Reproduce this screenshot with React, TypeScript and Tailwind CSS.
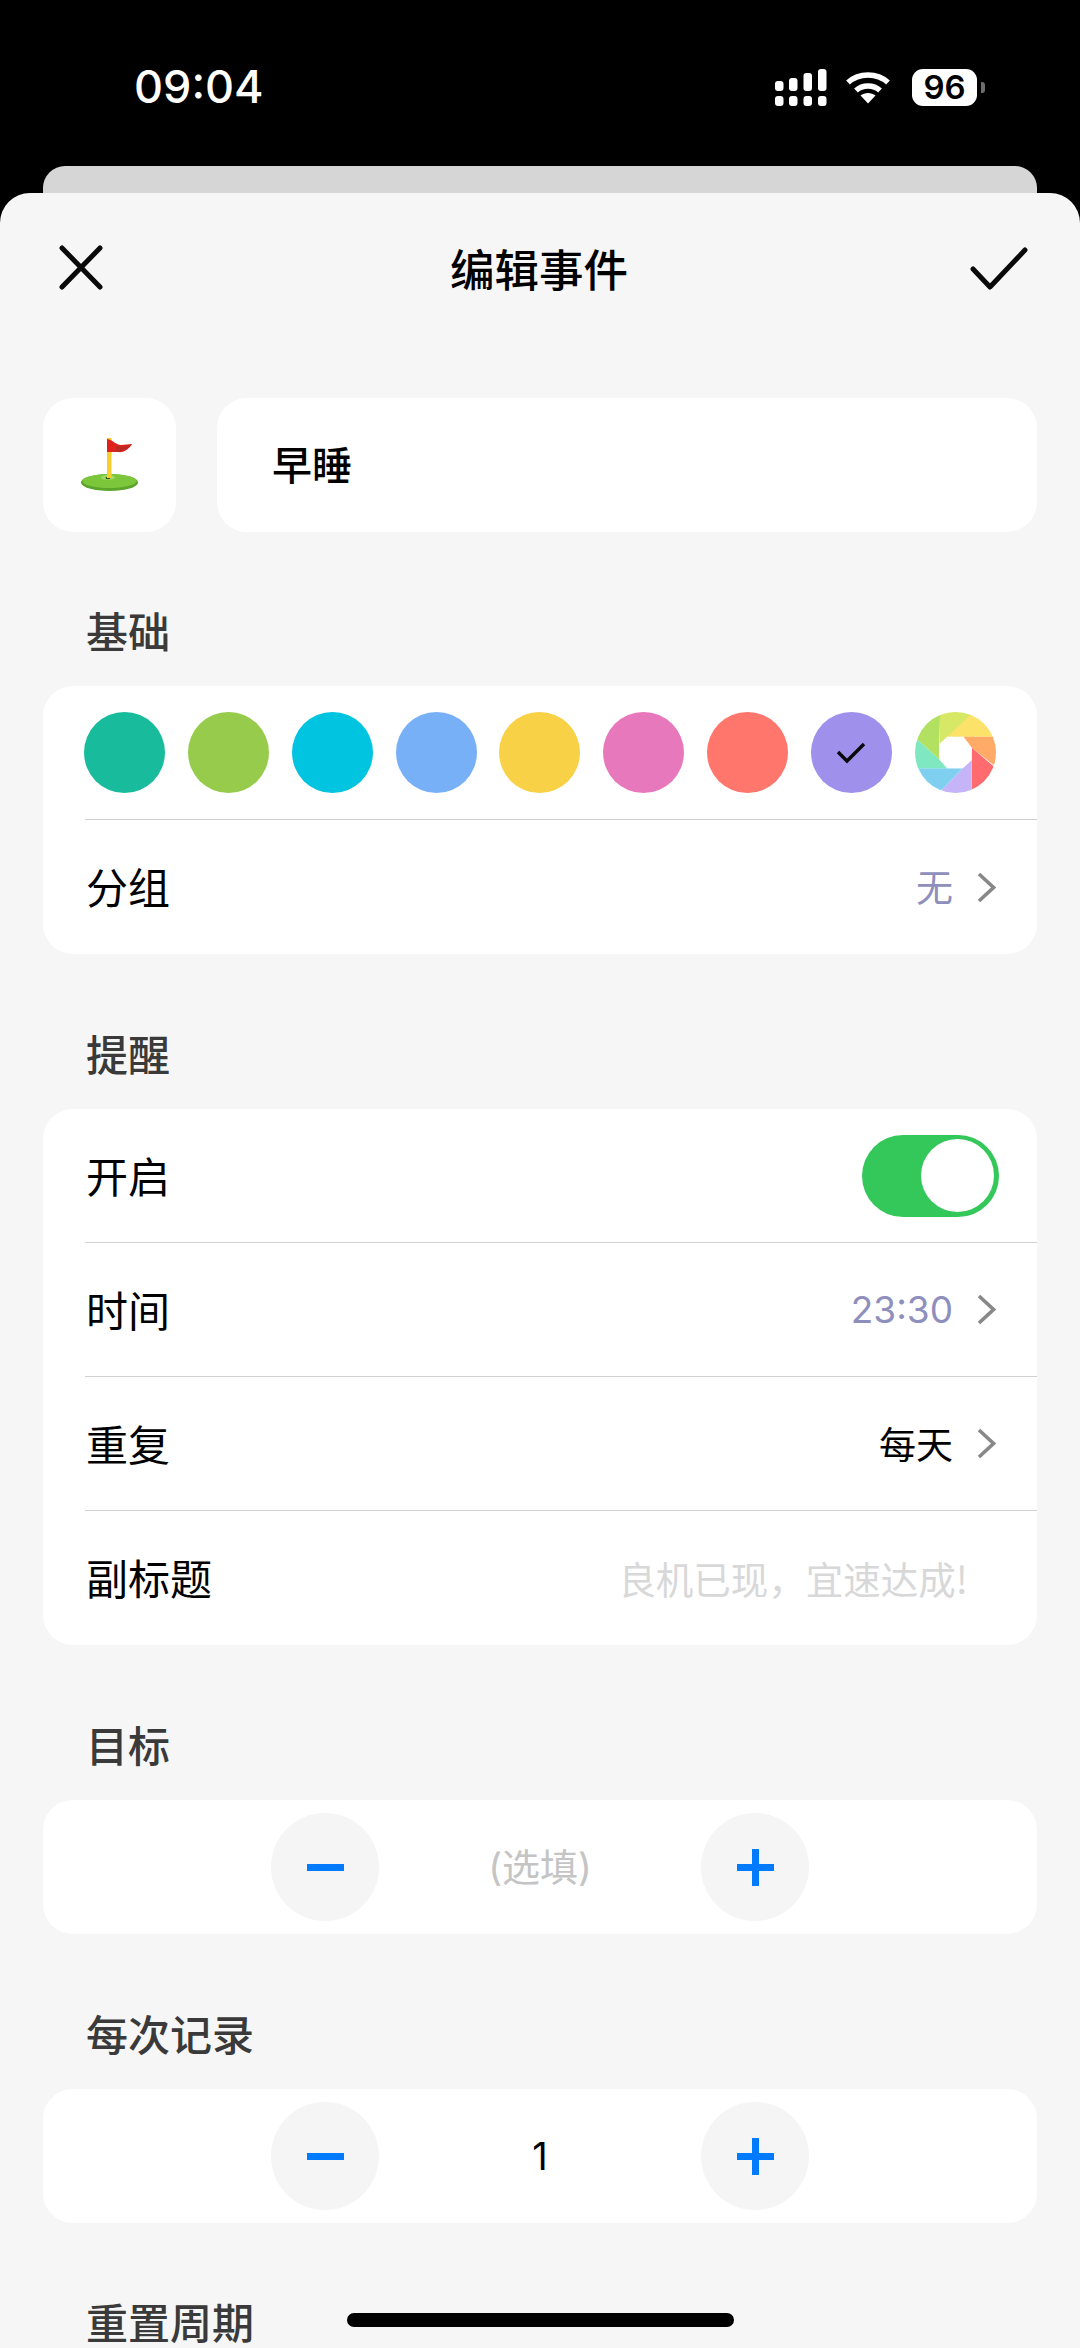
const cjk = "font-['Noto_Sans_CJK_SC','Noto_Sans',sans-serif]";

function Chevron() {
  return (
    <svg width="19" height="31" viewBox="0 0 19 31" fill="none" className="ml-[24px] shrink-0">
      <path d="M2 2 L16.5 15.5 L2 29" stroke="#888888" strokeWidth="3.6" />
    </svg>
  );
}

function Flag() {
  return (
    <svg width="60" height="58" viewBox="0 0 60 58" className="mt-[2px]">
      <ellipse cx="29.5" cy="45.5" rx="28.5" ry="8.5" fill="#5aa52a" />
      <ellipse cx="29.5" cy="44" rx="27" ry="7" fill="#7cc63c" />
      <ellipse cx="28" cy="40.5" rx="7" ry="2.4" fill="#a2d862" />
      <ellipse cx="28" cy="41" rx="2.5" ry="1.2" fill="#2f5e14" />
      <rect x="27" y="1" width="4.5" height="40" fill="#f6cf2e" />
      <path d="M27 2 C33 3 36 8 41 8 C45 8 49 7 52 7 C49 12 44 16 38 15 C35 15 31 15 27 15 Z" fill="#e0201c" />
      <path d="M36 15 C42 15 48 12 52 7 C48 9 42 10 36 9 Z" fill="#bb2a22" />
    </svg>
  );
}

function Aperture() {
  return (
    <svg width="81" height="81" viewBox="0 0 81 81">
      <defs>
        <clipPath id="rim">
          <circle cx="40.5" cy="40.5" r="40.5" />
        </clipPath>
      </defs>
      <g clipPath="url(#rim)">
        <polygon points="25,-6 62,-6 48,24.7 32.3,24.7 25,32" fill="#d6e865" />
        <polygon points="32.3,24.7 56,2.5 70,0 90,24.7" fill="#fde26a" />
        <polygon points="48.3,24.7 90,24.7 90,62 56.7,35.7" fill="#ffaa66" />
        <polygon points="56.7,35.7 90,64 60,90 56.7,90" fill="#ff6b6e" />
        <polygon points="56.7,48 56.7,90 20,90 27.3,77.3 47.7,56.3" fill="#c5b4f8" />
        <polygon points="47.7,56.3 27.3,77.3 0,90 -5,56.3" fill="#7fd0f0" />
        <polygon points="32.3,56.3 -5,56.3 -5,22 2.3,27.3 24.3,47.3" fill="#80e8c0" />
        <polygon points="24.3,47.3 2.3,27.3 0,0 25,-6 25,4 24.3,32.3" fill="#b2e060" />
        <polygon points="32.3,24.7 48.3,24.7 56.7,35.7 56.7,48 47.7,56.3 32.3,56.3 24.3,47.3 24.3,32.3" fill="#ffffff" />
      </g>
    </svg>
  );
}

function Label({ text, tall }: { text: string; tall?: boolean }) {
  return (
    <div className={`${tall ? "h-[155px]" : "h-[154px]"} pl-[86px] pb-[36px] flex items-end text-[42px] leading-[40px] font-medium text-[#3a3a3a] ${cjk}`}>
      {text}
    </div>
  );
}

function Row({ label, children, border = true }: { label: string; children?: React.ReactNode; border?: boolean }) {
  return (
    <div className={`ml-[42px] pr-[41px] h-[134px] flex items-center justify-between ${border ? "border-b border-[#d2d2d2]" : ""}`}>
      <span className={`pl-[1px] pb-[3px] text-[42px] text-black ${cjk}`}>{label}</span>
      <div className="flex items-center">{children}</div>
    </div>
  );
}

function Stepper({ value, muted }: { value: string; muted?: boolean }) {
  return (
    <div className="mx-[43px] h-[134px] bg-white rounded-[30px] flex items-center justify-center">
      <div className="w-[108px] h-[108px] rounded-full bg-[#f5f5f5] flex items-center justify-center">
        <div className="w-[37px] h-[7px] bg-[#007aff]" />
      </div>
      <div className={`w-[322px] text-center text-[38px] ${muted ? "text-[#c4c4c4]" : "text-black"} font-['Inter','Noto_Sans_CJK_SC',sans-serif]`}>
        {value}
      </div>
      <div className="relative w-[108px] h-[108px] rounded-full bg-[#f5f5f5] flex items-center justify-center">
        <div className="w-[37px] h-[7px] bg-[#007aff]" />
        <div className="absolute w-[7px] h-[37px] bg-[#007aff]" />
      </div>
    </div>
  );
}

const colors = ["#18bc9c", "#96cb4b", "#00c4e0", "#78b0f8", "#f8d146", "#e878bc", "#ff766c"];

export default function App() {
  return (
    <div className="relative w-[1080px] h-[2348px] overflow-hidden bg-black">
      {/* status bar */}
      <div className="h-[166px] pt-[62px] pl-[134px] pr-[103px] flex items-start justify-between">
        <span className="text-white text-[45px] leading-[50px] font-medium font-['Inter',sans-serif]">09:04</span>
        <div className="flex items-start pt-[7px]">
          <svg width="53" height="37" viewBox="0 0 53 37" fill="white" className="mr-[18px]">
            <rect x="1" y="12" width="8.5" height="10" rx="3" />
            <rect x="15" y="9" width="8.5" height="13" rx="3" />
            <rect x="29.5" y="4" width="8.5" height="18" rx="3" />
            <rect x="44" y="0" width="8.5" height="22" rx="3" />
            <rect x="1" y="27" width="8.5" height="10" rx="3" />
            <rect x="15" y="27" width="8.5" height="10" rx="3" />
            <rect x="29.5" y="27" width="8.5" height="10" rx="3" />
            <rect x="44" y="27" width="8.5" height="10" rx="3" />
          </svg>
          <svg width="46" height="33" viewBox="0 0 46 33" fill="none" className="mr-[21px] mt-[2px]">
            <path d="M3 11.5 C14 1.5 32 1.5 43 11.5" stroke="white" strokeWidth="5.5" />
            <path d="M11 19.5 C17.5 13.5 28.5 13.5 35 19.5" stroke="white" strokeWidth="5.5" />
            <path d="M15.5 24.5 C19.5 21 26.5 21 30.5 24.5 L23 32.5 Z" fill="white" />
          </svg>
          <div className="relative w-[65px] h-[37px] rounded-[11px] bg-white flex items-center justify-center text-black text-[33px] font-semibold font-['Inter',sans-serif]">
            96
            <div className="absolute left-[69px] top-[13px] w-[4px] h-[11px] rounded-r-[3px] bg-[#6e6e6e]" />
          </div>
        </div>
      </div>

      <div className="mx-[43px] h-[27px] rounded-t-[22px] bg-[#d6d6d6]" />

      {/* sheet */}
      <div className="h-[2155px] rounded-t-[30px] bg-[#f6f6f6]">
        <div className="h-[150px] px-[56px] flex items-center justify-between">
          <svg width="50" height="50" viewBox="0 0 50 50" fill="none">
            <path d="M6 5 L44 44 M44 5 L6 44" stroke="#0a0a0a" strokeWidth="5" strokeLinecap="round" />
          </svg>
          <span className={`ml-[3px] text-[44.5px] font-medium text-black ${cjk}`}>编辑事件</span>
          <svg width="62" height="46" viewBox="0 0 62 46" fill="none" className="-mr-[7px]">
            <path d="M4 24 L21 42 L56 5" stroke="#0a0a0a" strokeWidth="5" strokeLinecap="round" strokeLinejoin="round" />
          </svg>
        </div>

        <div className="mt-[55px] mx-[43px] flex gap-[41px]">
          <div className="w-[133px] h-[134px] shrink-0 bg-white rounded-[30px] flex items-center justify-center">
            <Flag />
          </div>
          <div className={`flex-1 h-[134px] bg-white rounded-[30px] flex items-center pl-[55px] pb-[5px] text-[40px] font-medium text-black ${cjk}`}>
            早睡
          </div>
        </div>

        <Label text="基础" />
        <div className="mx-[43px] bg-white rounded-[30px]">
          <div className="ml-[42px] h-[133px] flex items-center border-b border-[#d2d2d2] box-content">
            <div className="-ml-[1px] flex items-center gap-[22.85px]">
              {colors.map((c) => (
                <div key={c} className="w-[81px] h-[81px] rounded-full shrink-0" style={{ backgroundColor: c }} />
              ))}
              <div className="w-[81px] h-[81px] rounded-full shrink-0 bg-[#9f90ec] flex items-center justify-center">
                <svg width="32" height="26" viewBox="0 0 32 26" fill="none">
                  <path d="M3 12 L12 21 L29 4" stroke="#0a0a0a" strokeWidth="3.4" />
                </svg>
              </div>
              <div className="shrink-0"><Aperture /></div>
            </div>
          </div>
          <Row label="分组" border={false}>
            <span className={`text-[37px] text-[#8f8fbd] ${cjk}`}>无</span>
            <Chevron />
          </Row>
        </div>

        <Label text="提醒" tall />
        <div className="mx-[43px] bg-white rounded-[30px]">
          <Row label="开启">
            <div className="w-[137px] h-[82px] -mr-[3px] rounded-full bg-[#34c759] flex items-center justify-end pr-[5px]">
              <div className="w-[73px] h-[73px] rounded-full bg-white" />
            </div>
          </Row>
          <Row label="时间">
            <span className="text-[37px] text-[#8f8fbd] font-['Inter',sans-serif] font-normal">23:30</span>
            <Chevron />
          </Row>
          <Row label="重复">
            <span className={`text-[37px] text-black ${cjk}`}>每天</span>
            <Chevron />
          </Row>
          <Row label="副标题" border={false}>
            <span className={`text-[37.5px] text-[#d8d8d8] pr-[28px] ${cjk}`}>良机已现，宜速达成!</span>
          </Row>
        </div>

        <Label text="目标" tall />
        <Stepper value="(选填)" muted />
        <Label text="每次记录" tall />
        <Stepper value="1" />
        <Label text="重置周期" />
      </div>

      <div className="absolute left-[347px] top-[2313px] w-[387px] h-[14px] rounded-full bg-black" />
    </div>
  );
}
